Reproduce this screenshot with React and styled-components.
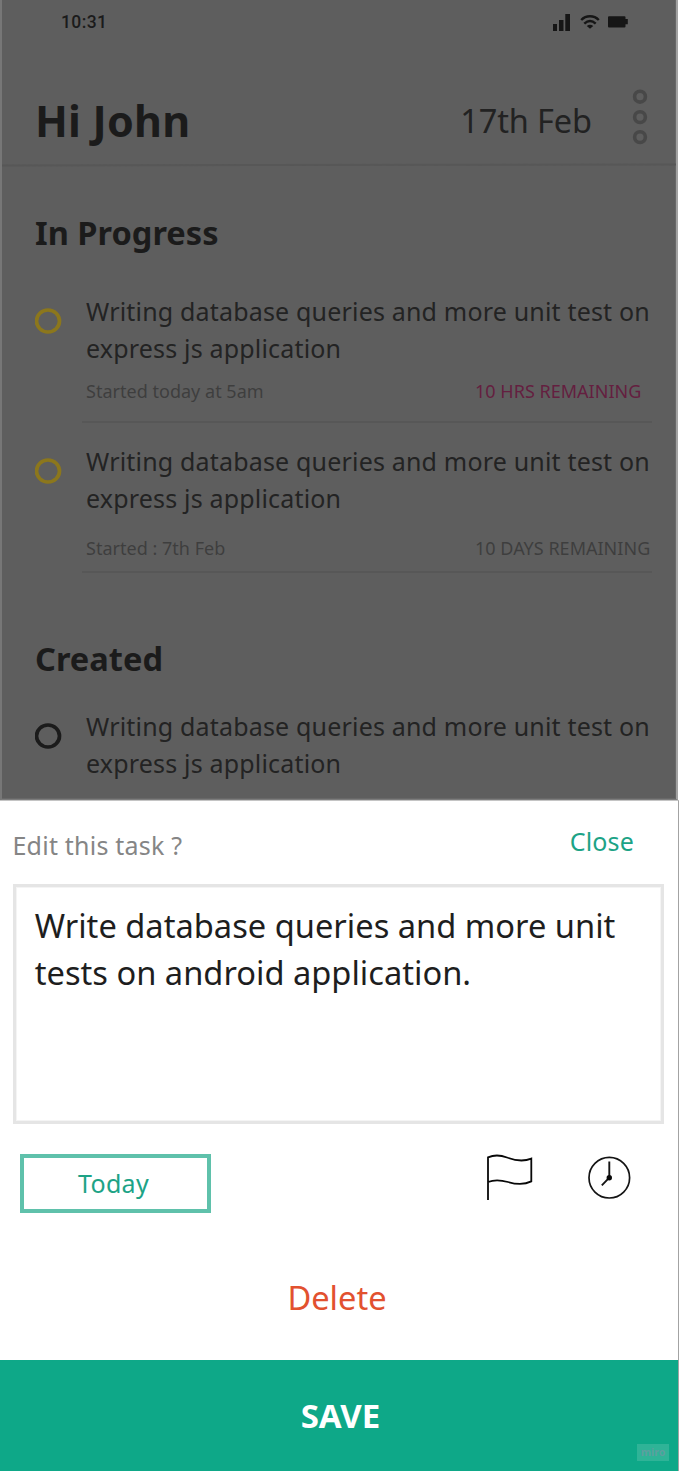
import React from "react";
import styled, { createGlobalStyle } from "styled-components";

const GlobalStyle = createGlobalStyle`
  *, *::before, *::after { box-sizing: border-box; }
  body {
    margin: 0;
    background: #fff;
    font-family: "Noto Sans", "Open Sans", sans-serif;
  }
  button { border: 0; padding: 0; background: none; font-family: inherit; }
  h1, h2, p { margin: 0; }
  svg { display: block; flex: none; }
`;

const Phone = styled.main`
  position: relative;
  width: 679px;
  height: 1471px;
  overflow: hidden;
  background: #fff;
`;

const DimmedScreen = styled.section`
  width: 678px;
  height: 800px;
  overflow: hidden;
  background: #5e5e5e;
  border-left: 2px solid #777;
  border-right: 2px solid #a2a2a2;
  border-bottom: 1px solid #7c7c7c;
  box-shadow: inset -1px -1px 0 #686868;
  color: #1b1b1b;
`;

const StatusBar = styled.div`
  display: flex;
  align-items: center;
  height: 44px;
  padding: 0 48px 0 59px;
`;

const Time = styled.span`
  margin-right: auto;
  font-family: Roboto, sans-serif;
  font-size: 17.5px;
  font-weight: 500;
  letter-spacing: 0.4px;
`;

const Header = styled.header`
  display: flex;
  align-items: flex-start;
  height: 120px;
  padding: 45px 28px 0 33px;
`;

const Greeting = styled.h1`
  margin: 3px auto 0 0;
  font-size: 43px;
  font-weight: 700;
  line-height: 58px;
  letter-spacing: 0.2px;
`;

const DateLabel = styled.span`
  margin: 10px 40px 0 0;
  color: #222;
  font-size: 32.5px;
  line-height: 44px;
  letter-spacing: -0.1px;
`;

const HeaderRule = styled.div`
  height: 2px;
  background: #575757;
  transform: rotate(-0.08deg);
`;

const Section = styled.section`
  padding: ${(p) => p.$top}px 24.5px 0 33px;
`;

const SectionTitle = styled.h2`
  margin-bottom: ${(p) => p.$gap}px;
  font-size: 32.6px;
  font-weight: 700;
  line-height: 44px;
`;

const TaskRow = styled.article`
  display: flex;
  align-items: flex-start;
  gap: 20px;
  & + & { margin-top: 20px; }
`;

const RingMark = styled.svg`
  margin-top: 15px;
  fill: none;
  stroke: ${(p) => p.$color};
  stroke-width: 3.7px;
`;

const TaskBody = styled.div`
  flex: 1;
  height: 130px;
  padding-left: 4px;
  border-bottom: ${(p) => (p.$last ? "0" : "2px solid #575757")};
`;

const TaskTitle = styled.p`
  color: #232323;
  font-size: 25px;
  line-height: 36.5px;
  letter-spacing: 0.18px;
  white-space: nowrap;
`;

const TaskMeta = styled.div`
  display: grid;
  grid-template-columns: 389px auto;
  margin-top: ${(p) => p.$gap}px;
  color: #3e3e3e;
  font-size: 18px;
  line-height: 24px;
  letter-spacing: 0.02px;
  white-space: nowrap;
`;

const Remaining = styled.span`
  color: ${(p) => (p.$urgent ? "#641f40" : "#3e3e3e")};
`;

const Sheet = styled.section`
  display: flex;
  flex-direction: column;
  height: 671px;
  background: #fff;
  border-top: 1px solid #c4c4c4;
  border-right: 1px solid #a3a3a3;
`;

const SheetHeader = styled.div`
  display: flex;
  justify-content: space-between;
  align-items: flex-start;
  height: 83px;
  padding: 22px 44px 0 12.5px;
  font-size: 25px;
  line-height: 36px;
`;

const Prompt = styled.span`
  margin-top: 4px;
  color: #858585;
  letter-spacing: 0.22px;
`;

const CloseButton = styled.button`
  color: #1da386;
  font-size: 25px;
  line-height: 36px;
  letter-spacing: 0.15px;
`;

const Editor = styled.div`
  height: 240px;
  margin: 0 14px 1px 13px;
  padding: 15px 0 0 18.7px;
  border: 3px solid #e5e5e5;
  box-shadow: inset 0 0 0 1px #f4f4f4;
  color: #1e1e1e;
  font-size: 32.65px;
  line-height: 47px;
  white-space: nowrap;
`;

const Tools = styled.div`
  display: flex;
  align-items: flex-start;
  height: 89px;
  padding: 28px 47px 0 20px;
`;

const TodayButton = styled.button`
  width: 191px;
  height: 59px;
  margin: 1px auto 0 0;
  padding-right: 4px;
  border: 4px solid #5fc1ab;
  color: #1da386;
  font-size: 25px;
  line-height: 49px;
  letter-spacing: 0.3px;
`;

const IconGroup = styled.div`
  display: flex;
  gap: 54px;
`;

const DeleteButton = styled.button`
  height: 44px;
  margin-top: 62px;
  padding-right: 4px;
  color: #e2512f;
  font-size: 32.6px;
  line-height: 44px;
`;

const SaveButton = styled.button`
  height: 111px;
  margin-top: auto;
  padding-left: 3px;
  background: #0ea888;
  color: #fff;
  font-size: 33px;
  font-weight: 700;
`;

const Badge = styled.span`
  position: absolute;
  right: 10px;
  bottom: 10px;
  width: 32px;
  height: 17px;
  background: #2fb397;
  color: #5c9f9f;
  font-size: 10.5px;
  font-weight: 700;
  line-height: 16px;
  text-align: center;
`;

function StatusIcons() {
  return (
    <svg width="76" height="20" viewBox="0 0 76 20" fill="#161616">
      <path d="M1 12h4v7H1zM7 8h4.5v11H7zM13.3 2H18v17h-4.7z" />
      <g fill="none" stroke="#161616" strokeWidth="2.4">
        <path d="M29.2 8C34 3 42 3 46.8 8" />
        <path d="M32.3 11.7C36 8.2 40 8.2 43.7 11.7" />
      </g>
      <path d="M34.8 14Q38 11.6 41.2 14L38 16.8z" />
      <path d="M57 4.3h15.5q1 0 1 1V7H75.8v5.3h-2.3v2.2q0 1-1 1H57q-1 0-1-1v-9.2q0-1 1-1z" />
    </svg>
  );
}

function MenuRings() {
  return (
    <svg width="16" height="57" viewBox="0 0 16 57" fill="none" stroke="#484848" strokeWidth="3.6">
      <circle cx="8" cy="7.7" r="5.4" />
      <circle cx="8" cy="28.1" r="5.4" />
      <circle cx="8" cy="48.1" r="5.4" />
    </svg>
  );
}

function Ring({ color }) {
  return (
    <RingMark $color={color} width="27" height="26" viewBox="0 0 27 26">
      <ellipse cx="13" cy="13" rx="11.5" ry="11" />
    </RingMark>
  );
}

function FlagIcon() {
  return (
    <svg width="48" height="48" viewBox="0 0 48 48" fill="none" stroke="#080808" strokeWidth="1.8">
      <path d="M3 47V4.3C9 1.8 15 1.8 22 4.5S38 9 46.3 5.6V28.4C39 32 32 31.6 23 29S9 26.5 3 29" />
    </svg>
  );
}

function ClockIcon() {
  return (
    <svg width="44" height="48" viewBox="0 0 44 48" fill="none" stroke="#141414" strokeWidth="1.7">
      <circle cx="22.3" cy="24.7" r="20.3" />
      <path d="M22.3 8.5V24.7L14.8 32.3" strokeWidth="1.9" />
      <circle cx="22.3" cy="24.7" r="2.7" fill="#080808" stroke="none" />
    </svg>
  );
}

function Task({ color, started, remaining, urgent, gap }) {
  return (
    <TaskRow>
      <Ring color={color} />
      <TaskBody $last={!started}>
        <TaskTitle>
          Writing database queries and more unit test on
          <br />
          express js application
        </TaskTitle>
        {started && (
          <TaskMeta $gap={gap}>
            <span>{started}</span>
            <Remaining $urgent={urgent}>{remaining}</Remaining>
          </TaskMeta>
        )}
      </TaskBody>
    </TaskRow>
  );
}

export default function App() {
  return (
    <Phone>
      <GlobalStyle />
      <DimmedScreen>
        <StatusBar>
          <Time>10:31</Time>
          <StatusIcons />
        </StatusBar>
        <Header>
          <Greeting>Hi John</Greeting>
          <DateLabel>17th Feb</DateLabel>
          <MenuRings />
        </Header>
        <HeaderRule />
        <Section $top={45}>
          <SectionTitle $gap={38}>In Progress</SectionTitle>
          <Task
            color="#8c771c"
            started="Started today at 5am"
            remaining="10 HRS REMAINING"
            urgent
            gap={13}
          />
          <Task
            color="#8c771c"
            started="Started : 7th Feb"
            remaining="10 DAYS REMAINING"
            gap={20}
          />
        </Section>
        <Section $top={64}>
          <SectionTitle $gap={27}>Created</SectionTitle>
          <Task color="#1b1b1b" />
        </Section>
      </DimmedScreen>
      <Sheet>
        <SheetHeader>
          <Prompt>Edit this task ?</Prompt>
          <CloseButton>Close</CloseButton>
        </SheetHeader>
        <Editor>
          Write database queries and more unit
          <br />
          tests on android application.
        </Editor>
        <Tools>
          <TodayButton>Today</TodayButton>
          <IconGroup>
            <FlagIcon />
            <ClockIcon />
          </IconGroup>
        </Tools>
        <DeleteButton>Delete</DeleteButton>
        <SaveButton>SAVE</SaveButton>
      </Sheet>
      <Badge>miro</Badge>
    </Phone>
  );
}
